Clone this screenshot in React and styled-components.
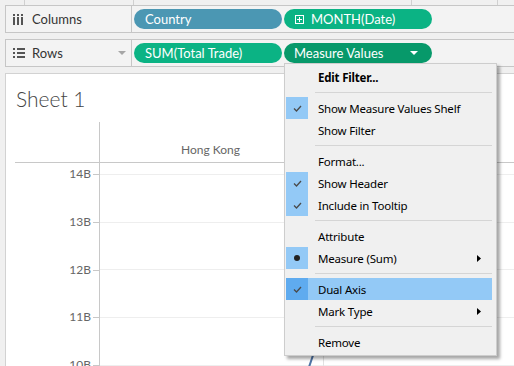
import React from 'react';
import styled, { createGlobalStyle } from 'styled-components';

const GlobalStyle = createGlobalStyle`
  html, body {
    margin: 0;
    padding: 0;
    background: #f0f0f0;
  }
  body {
    font-family: Lato, 'Noto Sans', sans-serif;
  }
`;

const ticks = ['14B', '13B', '12B', '11B', '10B'];

const menuItems = [
  { label: 'Edit Filter...', bold: true },
  { sep: true },
  { label: 'Show Measure Values Shelf', mark: 'check' },
  { label: 'Show Filter' },
  { sep: true },
  { label: 'Format...' },
  { label: 'Show Header', mark: 'check' },
  { label: 'Include in Tooltip', mark: 'check' },
  { sep: true },
  { label: 'Attribute' },
  { label: 'Measure (Sum)', mark: 'dot', sub: true },
  { sep: true },
  { label: 'Dual Axis', mark: 'check', active: true },
  { label: 'Mark Type', sub: true },
  { sep: true },
  { label: 'Remove' },
];

const ColumnsIcon = () => (
  <svg width="10" height="11" viewBox="0 0 10 11">
    <rect x="0" y="0" width="2" height="2" fill="#555" />
    <rect x="4" y="0" width="2" height="2" fill="#555" />
    <rect x="8" y="0" width="2" height="2" fill="#555" />
    <rect x="0" y="3" width="2" height="8" fill="#555" />
    <rect x="4" y="3" width="2" height="8" fill="#555" />
    <rect x="8" y="3" width="2" height="8" fill="#555" />
  </svg>
);

const RowsIcon = () => (
  <svg width="12" height="10" viewBox="0 0 12 10">
    {[0, 4, 8].map((y) => (
      <g key={y}>
        <rect x="0" y={y} width="2" height="2" fill="#555" />
        <rect x="4" y={y} width="8" height="2" fill="#555" />
      </g>
    ))}
  </svg>
);

const ExpandBox = () => (
  <svg width="9" height="9" viewBox="0 0 9 9">
    <rect x="0.5" y="0.5" width="8" height="8" fill="none" stroke="#fff" />
    <path d="M4.5 2v5M2 4.5h5" stroke="#fff" />
  </svg>
);

const Caret = ({ color }) => (
  <svg width="8" height="4" viewBox="0 0 8 4">
    <path d="M0 0h8L4 4z" fill={color} />
  </svg>
);

const CheckMark = () => (
  <svg width="9" height="7" viewBox="0 0 9 7">
    <path d="M1 3.5l2.5 2.5L8 1" fill="none" stroke="#4a4a4a" strokeWidth="1.3" />
  </svg>
);

const SubArrow = () => (
  <svg width="4" height="7" viewBox="0 0 4 7">
    <path d="M0 0l4 3.5L0 7z" fill="#000" />
  </svg>
);

const App = () => {
  return (
    <Page>
      <GlobalStyle />
      <TopStrip>
        <StripCell $w={25} />
        <StripCell $w={109} />
        <StripCell $w={278} />
        <StripCell $w={86} />
      </TopStrip>

      <Shelf>
        <ShelfLabel>
          <IconSlot><ColumnsIcon /></IconSlot>
          <span>Columns</span>
        </ShelfLabel>
        <PillArea>
          <Pill $tone="blue">Country</Pill>
          <Pill $tone="green">
            <ExpandBox />
            <span>MONTH(Date)</span>
          </Pill>
        </PillArea>
      </Shelf>

      <Shelf $gap>
        <ShelfLabel>
          <IconSlot><RowsIcon /></IconSlot>
          <span>Rows</span>
          <LabelCaret><Caret color="#a6a6a6" /></LabelCaret>
        </ShelfLabel>
        <PillArea>
          <Pill $tone="green">SUM(Total Trade)</Pill>
          <Pill $tone="dark">
            <span>Measure Values</span>
            <PillCaret><Caret color="#fff" /></PillCaret>
          </Pill>
        </PillArea>
      </Shelf>

      <Panel>
        <Title>Sheet 1</Title>
        <HeaderRow>
          <AxisHead />
          <PaneHead>Hong Kong</PaneHead>
        </HeaderRow>
        <Body>
          <AxisCol>
            {ticks.map((t) => (
              <TickRow key={t}>
                <TickLabel>{t}</TickLabel>
                <Tick />
              </TickRow>
            ))}
          </AxisCol>
          <PlotPane>
            <PaneCol>
              <Marks width="223" height="210" viewBox="0 0 223 210">
                <line x1="224" y1="160" x2="207" y2="210" stroke="#4e74a6" strokeWidth="2" />
              </Marks>
            </PaneCol>
          </PlotPane>
        </Body>
      </Panel>

      <Menu>
        {menuItems.map((item, i) =>
          item.sep ? (
            <Separator key={i} />
          ) : (
            <MenuRow key={i} $active={item.active}>
              <MarkBox $on={!!item.mark} $active={item.active}>
                {item.mark === 'check' && <CheckMark />}
                {item.mark === 'dot' && <Dot />}
              </MarkBox>
              <MenuText $bold={item.bold}>{item.label}</MenuText>
              {item.sub && <SubSlot><SubArrow /></SubSlot>}
            </MenuRow>
          )
        )}
      </Menu>
    </Page>
  );
};

const Page = styled.div`
  position: relative;
  width: 514px;
  height: 366px;
  overflow: hidden;
  background: #f0f0f0;
`;

const TopStrip = styled.div`
  display: flex;
  height: 5px;
`;

const StripCell = styled.div`
  width: ${(p) => p.$w}px;
  border-right: 1px solid #d0d0d0;
  box-sizing: border-box;
`;

const Shelf = styled.div`
  display: flex;
  align-items: stretch;
  height: 28px;
  margin: ${(p) => (p.$gap ? '6px' : '0')} -4px 0 5px;
  border: 1px solid #c6c6c6;
  box-sizing: border-box;
  background: #f3f3f3;
`;

const ShelfLabel = styled.div`
  display: flex;
  align-items: center;
  width: 125px;
  flex-shrink: 0;
  border-right: 1px solid #c6c6c6;
  font-size: 13px;
  color: #333;
`;

const IconSlot = styled.span`
  display: flex;
  width: 12px;
  margin: 0 7px 0 7px;
`;

const LabelCaret = styled.span`
  display: flex;
  margin-left: auto;
  margin-right: 5px;
`;

const PillArea = styled.div`
  display: flex;
  align-items: center;
  gap: 2px;
  padding-left: 2px;
`;

const pillColors = {
  blue: '#4b97b3',
  green: '#0bb384',
  dark: '#07996a',
};

const Pill = styled.div`
  display: flex;
  align-items: center;
  gap: 7px;
  width: 148px;
  height: 20px;
  box-sizing: border-box;
  padding-left: ${(p) => (p.$tone === 'dark' ? '10px' : '11px')};
  border-radius: 10px;
  background: ${(p) => pillColors[p.$tone]};
  color: #fff;
  font-size: 13px;
  white-space: nowrap;
`;

const PillCaret = styled.span`
  display: flex;
  margin-left: auto;
  margin-right: 14px;
`;

const Panel = styled.div`
  margin: 6px -4px 0 5px;
  height: 300px;
  background: #fff;
  border: 1px solid #d2d2d2;
  padding-left: 9px;
`;

const Title = styled.div`
  height: 48px;
  box-sizing: border-box;
  padding: 14px 0 0 1px;
  font-family: Lato, sans-serif;
  font-weight: 300;
  font-size: 21px;
  line-height: 22px;
  color: #444;
`;

const HeaderRow = styled.div`
  display: flex;
  height: 40px;
  border-bottom: 1px solid #c8c8c8;
`;

const AxisHead = styled.div`
  width: 84px;
`;

const PaneHead = styled.div`
  display: flex;
  align-items: flex-end;
  justify-content: center;
  width: 223px;
  padding-bottom: 5px;
  box-sizing: border-box;
  border-left: 1px solid #c8c8c8;
  border-right: 1px solid #e2e2e2;
  font-size: 12px;
  color: #666;
`;

const Body = styled.div`
  display: flex;
  height: 210px;
`;

const AxisCol = styled.div`
  width: 84px;
  padding-top: 11px;
  box-sizing: border-box;
`;

const TickRow = styled.div`
  display: flex;
  justify-content: flex-end;
  align-items: flex-start;
  height: 47.75px;
`;

const TickLabel = styled.span`
  margin-top: -7px;
  padding-right: 2px;
  line-height: 14px;
  font-size: 12px;
  color: #666;
`;

const Tick = styled.span`
  width: 6px;
  height: 1px;
  background: #c8c8c8;
`;

const PlotPane = styled.div`
  flex: 1;
  display: flex;
  border-left: 1px solid #c8c8c8;
  background-image: repeating-linear-gradient(
    to bottom,
    #eeeeee 0,
    #eeeeee 1px,
    transparent 1px,
    transparent 47.75px
  );
  background-position: 0 11px;
`;

const PaneCol = styled.div`
  position: relative;
  width: 223px;
  border-right: 1px solid #e2e2e2;
`;

const Marks = styled.svg`
  position: absolute;
  left: 0;
  top: 0;
`;

const Menu = styled.div`
  position: absolute;
  left: 284px;
  top: 63px;
  width: 213px;
  box-sizing: border-box;
  padding: 2px 4px 2px 1px;
  background: #f0f0f0;
  border: 1px solid #cdcdcd;
  box-shadow: 3px 3px 3px rgba(0, 0, 0, 0.35);
  font-family: 'Noto Sans', sans-serif;
  font-size: 11.5px;
  letter-spacing: -0.2px;
  color: #000;
`;

const MenuRow = styled.div`
  display: flex;
  align-items: center;
  height: 22px;
  background: ${(p) => (p.$active ? '#93c9f6' : 'transparent')};
`;

const MarkBox = styled.span`
  display: flex;
  align-items: center;
  justify-content: center;
  width: 22px;
  height: 22px;
  margin-right: 10px;
  background: ${(p) => (p.$active ? '#5fabef' : p.$on ? '#93c9f6' : 'transparent')};
`;

const Dot = styled.span`
  width: 6px;
  height: 6px;
  border-radius: 50%;
  background: #222;
`;

const MenuText = styled.span`
  font-weight: ${(p) => (p.$bold ? 700 : 400)};
  white-space: nowrap;
`;

const SubSlot = styled.span`
  display: flex;
  margin-left: auto;
  margin-right: 11px;
`;

const Separator = styled.div`
  height: 9px;
  margin-left: 29px;
  background: linear-gradient(#d5d5d5, #d5d5d5) no-repeat 0 4px / 100% 1px;
`;

export default App;
